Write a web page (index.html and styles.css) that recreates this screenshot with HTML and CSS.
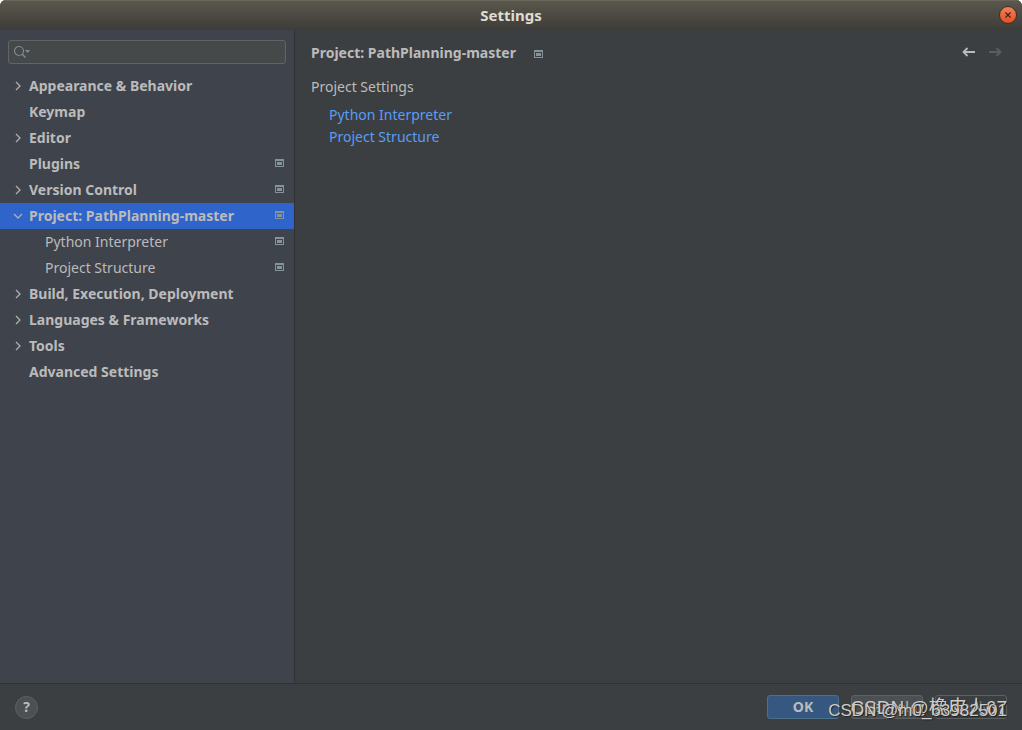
FILE: index.html
```html
<!DOCTYPE html>
<html lang="en">
<head>
<meta charset="utf-8">
<title>Settings</title>
<link rel="stylesheet" href="styles.css">
</head>
<body>
<svg class="defs" aria-hidden="true">
  <symbol id="right" viewBox="0 0 16 16"><path d="M6 4l4 4-4 4" fill="none" stroke="currentColor" stroke-width="1.3"/></symbol>
  <symbol id="down" viewBox="0 0 16 16"><path d="M4 6l4 4 4-4" fill="none" stroke="currentColor" stroke-width="1.3"/></symbol>
  <symbol id="scope" viewBox="0 0 9 8"><path d="M0 0h9v8H0zM1 2v5h7V2zM2 3h5v3H2z" fill="currentColor" fill-rule="evenodd"/></symbol>
</svg>
<div class="window">
  <header class="titlebar">
    <h1 class="title">Settings</h1>
    <button class="close" aria-label="Close"><svg viewBox="0 0 16 16"><path d="M5.500 5.500l5 5M10.500 5.500l-5 5" stroke="#3a2a20" stroke-width="1.3"/></svg></button>
  </header>
  <div class="body">
    <aside class="sidebar">
      <label class="search">
        <svg class="search-icon" viewBox="0 0 18 14" aria-hidden="true"><circle cx="6" cy="6" r="4.5" fill="none" stroke="#7d8b93" stroke-width="1.2"/><path d="M9 9l3.500 3.500" stroke="#7d8b93" stroke-width="1.5"/><path d="M12 5h5l-2.500 3z" fill="#7d8b93"/></svg>
        <input class="search-input" type="text" aria-label="Search settings">
      </label>
      <nav class="tree">
        <a class="row" href="#"><svg class="arrow"><use href="#right"/></svg><span class="name">Appearance &amp; Behavior</span></a>
        <a class="row" href="#"><span class="arrow"></span><span class="name">Keymap</span></a>
        <a class="row" href="#"><svg class="arrow"><use href="#right"/></svg><span class="name">Editor</span></a>
        <a class="row" href="#"><span class="arrow"></span><span class="name">Plugins</span><svg class="scope"><use href="#scope"/></svg></a>
        <a class="row" href="#"><svg class="arrow"><use href="#right"/></svg><span class="name">Version Control</span><svg class="scope"><use href="#scope"/></svg></a>
        <a class="row selected" href="#" aria-current="page"><svg class="arrow"><use href="#down"/></svg><span class="name">Project: PathPlanning-master</span><svg class="scope"><use href="#scope"/></svg></a>
        <a class="row child" href="#"><span class="name">Python Interpreter</span><svg class="scope"><use href="#scope"/></svg></a>
        <a class="row child" href="#"><span class="name">Project Structure</span><svg class="scope"><use href="#scope"/></svg></a>
        <a class="row" href="#"><svg class="arrow"><use href="#right"/></svg><span class="name">Build, Execution, Deployment</span></a>
        <a class="row" href="#"><svg class="arrow"><use href="#right"/></svg><span class="name">Languages &amp; Frameworks</span></a>
        <a class="row" href="#"><svg class="arrow"><use href="#right"/></svg><span class="name">Tools</span></a>
        <a class="row" href="#"><span class="arrow"></span><span class="name">Advanced Settings</span></a>
      </nav>
    </aside>
    <main class="content">
      <div class="heading">
        <h2 class="page-title">Project: PathPlanning-master</h2>
        <svg class="scope"><use href="#scope"/></svg>
        <div class="history">
          <button class="nav-button" aria-label="Back"><svg viewBox="0 0 16 16"><path d="M14 7H2.500M6.500 3l-4 4 4 4" fill="none" stroke="currentColor" stroke-width="1.800"/></svg></button>
          <button class="nav-button" aria-label="Forward" disabled><svg viewBox="0 0 16 16"><path d="M1 7h11.500M8.500 3l4 4-4 4" fill="none" stroke="currentColor" stroke-width="1.800"/></svg></button>
        </div>
      </div>
      <p class="caption">Project Settings</p>
      <ul class="links">
        <li><a class="link" href="#">Python Interpreter</a></li>
        <li><a class="link" href="#">Project Structure</a></li>
      </ul>
    </main>
  </div>
  <footer class="footer">
    <button class="help" aria-label="Help">?</button>
    <div class="actions">
      <button class="button primary">OK</button>
      <button class="button">Cancel</button>
      <button class="button" disabled>Apply</button>
      <span class="mark mark-back">CSDN @橡皮人67</span>
      <span class="mark mark-front">CSDN @m0_63982501</span>
    </div>
  </footer>
</div>
</body>
</html>
```

FILE: styles.css
```css
* { box-sizing: border-box; }
body { margin: 0; background: #fff; color: #bbb; font: 14px/20px "Noto Sans", sans-serif; }
button { font: inherit; color: inherit; padding: 0; border: 0; background: none; }
a { color: inherit; text-decoration: none; }
.defs { display: none; }
.window { display: flex; flex-direction: column; min-height: 100vh; background: #3c3f41; border-radius: 6px 6px 0 0; overflow: hidden; }
.titlebar { display: grid; grid-template-columns: 1fr auto 1fr; align-items: center; height: 30px; padding: 0 5px; background: linear-gradient(#5b584c, #3d3c38); box-shadow: inset 0 1px #68655a; }
.title { grid-column: 2; margin: 0; font-size: 15px; line-height: 20px; font-weight: 700; color: #dfdbd2; }
.close { justify-self: end; width: 18px; height: 18px; border: 1px solid #37332d; border-radius: 50%; background: linear-gradient(#f5805a, #e2501f); }
.close svg { display: block; width: 16px; height: 16px; }
.body { display: flex; flex: 1; }
.sidebar { flex: 0 0 295px; background: #3f434c; border-right: 1px solid #2f3133; }
.search { display: flex; align-items: center; height: 24px; margin: 10px 8px 9px; padding-left: 4px; background: #45494a; border: 1px solid #646464; border-radius: 3px; }
.search-icon { width: 18px; height: 14px; }
.search-input { flex: 1; min-width: 0; border: 0; outline: 0; background: none; color: inherit; font: inherit; }
.row { display: flex; align-items: center; height: 26px; padding: 0 10px; font-weight: 700; }
.row.child { padding-left: 45px; font-weight: 400; }
.row.selected { background: #2f65ca; }
.arrow { flex: none; width: 16px; height: 16px; margin-right: 3px; color: #adb0b3; }
.name { flex: 1; white-space: nowrap; }
.scope { flex: none; width: 9px; height: 8px; color: #87939a; }
.row .scope { margin-bottom: 2px; }
.content { flex: 1; padding: 12px 18px 12px 16px; }
.heading { display: flex; align-items: center; gap: 18px; height: 22px; }
.heading .scope { margin-top: 2px; }
.page-title { margin: 0; font-size: 14px; line-height: 20px; }
.history { display: flex; gap: 11px; margin-left: auto; }
.nav-button { width: 16px; height: 16px; color: #bbb; }
.nav-button:disabled { color: #5b5d5f; }
.nav-button svg { display: block; }
.caption { margin: 13px 0 7px; }
.links { margin: 0; padding: 0 0 0 18px; list-style: none; }
.links li { height: 22px; line-height: 22px; }
.link { color: #589df6; }
.footer { display: flex; align-items: center; justify-content: space-between; height: 47px; padding: 0 15px; border-top: 1px solid #2f3133; }
.help { width: 23px; height: 23px; border: 1px solid #5e6162; border-radius: 50%; background: #4c5052; font-weight: 700; line-height: 20px; }
.actions { position: relative; display: flex; gap: 12px; }
.button { width: 72px; height: 24px; border: 1px solid #5e6060; border-radius: 3px; background: #4c5052; }
.button:disabled { background: none; color: #777; }
.primary { border-color: #4c708c; background: #365880; font-weight: 700; }
.mark { position: absolute; right: 0; color: #ccc; white-space: nowrap; font-family: "Liberation Sans", "Noto Sans CJK SC", sans-serif; text-shadow: 1px 1px 1px #222; }
.mark-back { top: 3px; font-size: 19px; }
.mark-front { top: 6px; font-size: 17px; }
```
